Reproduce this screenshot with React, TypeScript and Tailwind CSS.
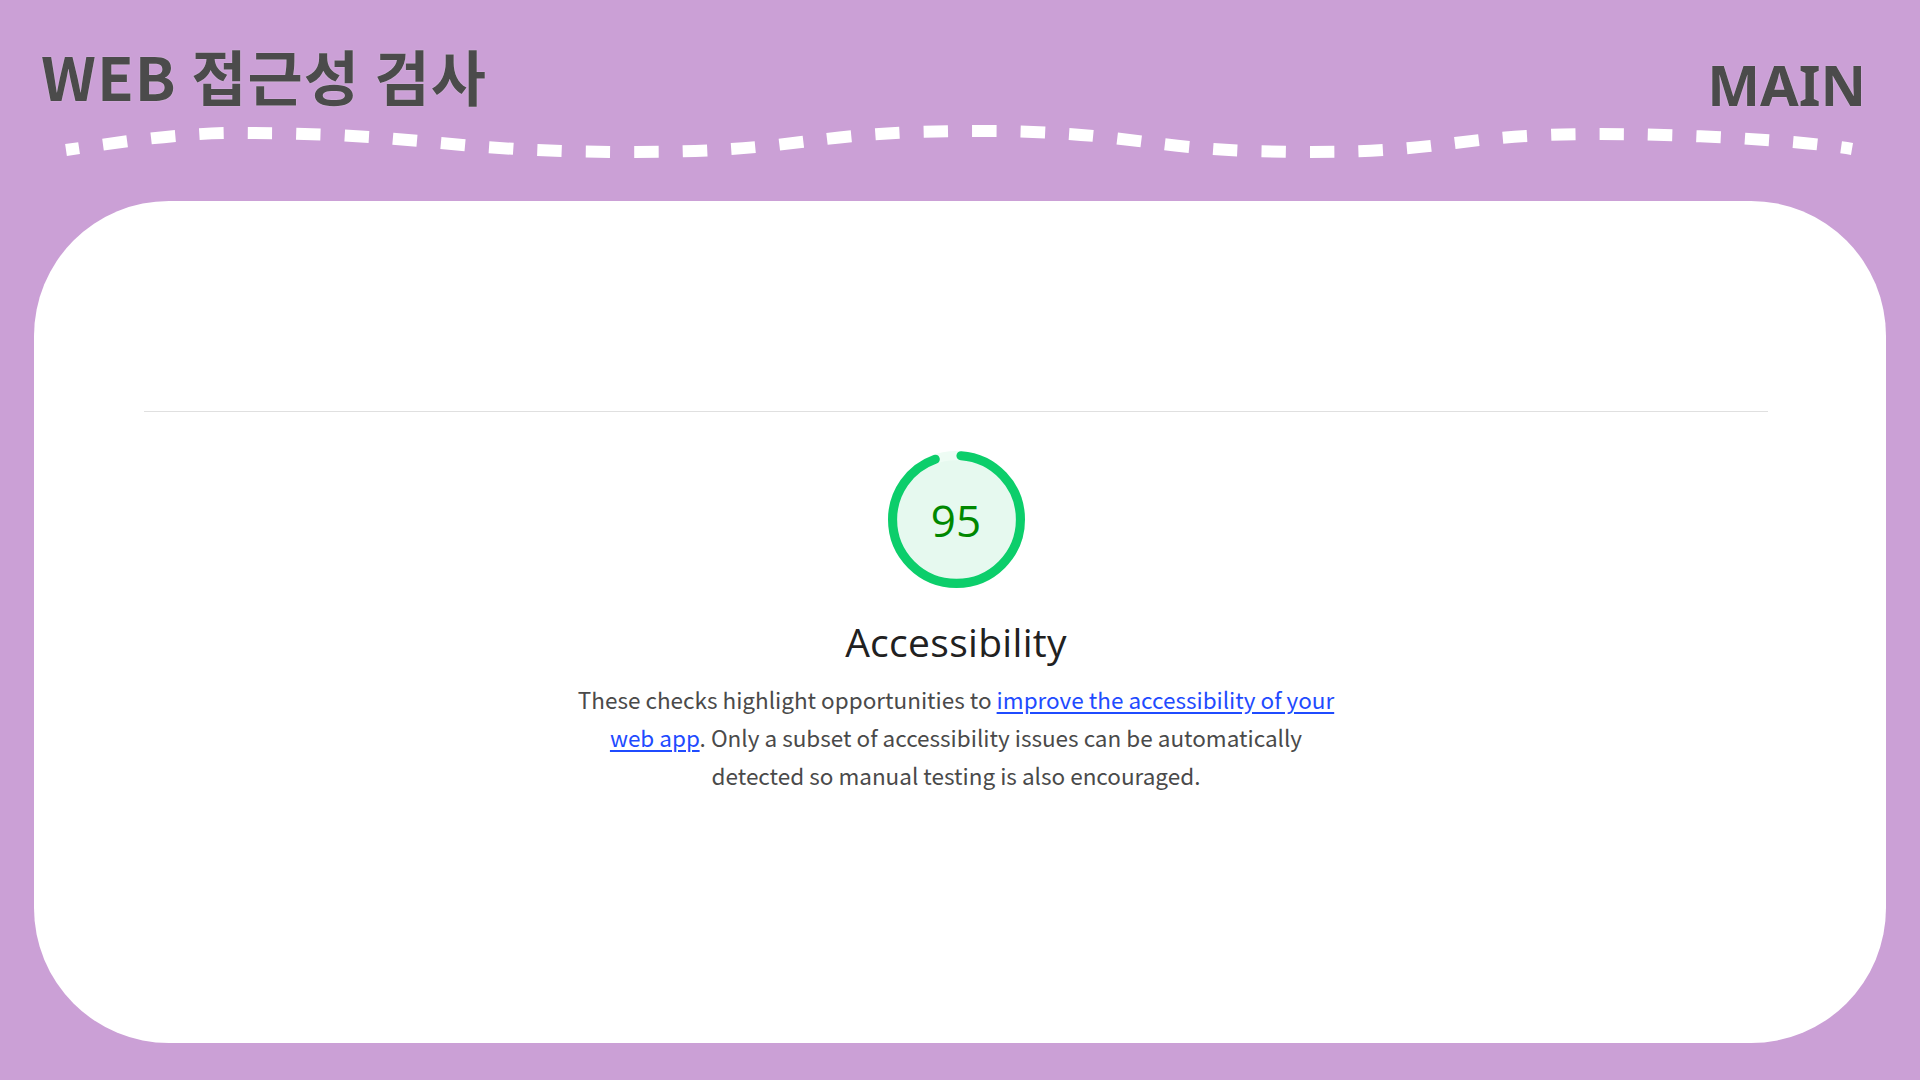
import React from "react";

const CIRC = 2 * Math.PI * 56;

function Gauge() {
  return (
    <div className="relative w-[137px] h-[137px]">
      <svg width="137" height="137" viewBox="0 0 120 120" className="block">
        <circle cx="60" cy="60" r="56" fill="#e6f9ef" stroke="#eefcf4" strokeWidth="8" />
        <circle
          cx="60"
          cy="60"
          r="56"
          fill="none"
          stroke="#0cce6b"
          strokeWidth="8"
          strokeLinecap="round"
          strokeDasharray={`${0.95 * CIRC - 6} ${CIRC}`}
          strokeDashoffset={-4}
          transform="rotate(-90 60 60)"
        />
      </svg>
      <div className="absolute inset-0 flex items-center justify-center text-[44px] leading-none text-[#008800] font-['Open_Sans',sans-serif] pt-[1px]">
        95
      </div>
    </div>
  );
}

export default function App() {
  return (
    <div className="w-[1920px] h-[1080px] bg-[#cba0d6] flex flex-col overflow-hidden">
      <header className="relative h-[201px] shrink-0 flex justify-between items-start pl-[41px] pr-[54px] pt-[33px]">
        <h1 className="text-[60px] leading-[84px] font-bold text-[#4b4b4b] font-['Noto_Sans_CJK_KR','Noto_Sans',sans-serif] tracking-[1px] [text-shadow:0_0_1px_#efe4f3]">
          WEB 접근성 검사
        </h1>
        <div className="text-[56px] leading-[84px] font-bold text-[#4b4b4b] font-['Noto_Sans','Noto_Sans_CJK_KR',sans-serif] mt-[9px] [text-shadow:0_0_1px_#efe4f3]">
          MAIN
        </div>
        <svg
          className="absolute left-0 top-0 pointer-events-none"
          width="1920"
          height="201"
          viewBox="0 0 1920 201"
        >
          <path
            d="M66 150 C120 142 180 133 235 133 C435 133 435 152 635 152 C805 152 805 131 975 131 C1142 131 1142 152 1310 152 C1455 152 1455 134 1600 134 C1680 134 1800 140 1852 149"
            fill="none"
            stroke="#ffffff"
            strokeWidth="12"
            pathLength={1802}
            strokeDasharray="24.5 24.2"
            strokeDashoffset="11"
          />
        </svg>
      </header>
      <main className="mx-[34px] h-[842px] shrink-0 bg-white rounded-[135px] flex flex-col items-center pr-[8px]">
        <div className="w-full px-[110px] pt-[210px]">
          <div className="h-px bg-[#e0e0e0]" />
        </div>
        <div className="mt-[39px]">
          <Gauge />
        </div>
        <div className="mt-[30px] text-[39px] leading-[48px] text-[#212121] font-['Open_Sans',sans-serif] tracking-[0.3px]">
          Accessibility
        </div>
        <p className="mt-[14px] text-center text-[22.5px] leading-[38px] text-[#4a4a4a] font-['Noto_Sans_CJK_KR','Noto_Sans',sans-serif] whitespace-nowrap">
          These checks highlight opportunities to{" "}
          <a href="#" className="text-[#1f4bff] underline underline-offset-[3px]">
            improve the accessibility of your
            <br />
            web app
          </a>
          . Only a subset of accessibility issues can be automatically
          <br />
          detected so manual testing is also encouraged.
        </p>
      </main>
    </div>
  );
}
